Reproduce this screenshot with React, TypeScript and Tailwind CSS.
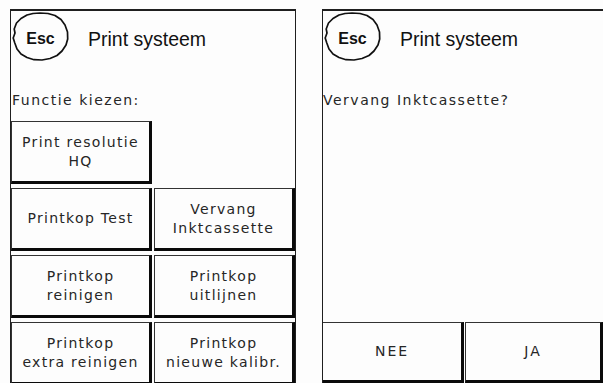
const body = "font-['DejaVu_Sans',sans-serif] text-[14px] tracking-[1.3px] text-[#262626]"

function EscButton() {
  return (
    <div className="relative w-[57px] h-[49px] shrink-0 flex items-center justify-center">
      <svg className="absolute inset-0" width="57" height="49" viewBox="0 0 57 49" fill="none">
        <path
          d="M28 1 L36 1.5 L43 3.5 L49 7.5 L53 13 L55.5 20 L55.7 27 L54 33 L50 39 L45 43.5 L38 46.5 L30 48 L22 47.7 L15 45.5 L9 42 L5 37 L2.8 31 L1.2 26 L3 21 L2.2 17 L4.5 11 L9 6.5 L15 3 L21 1.5 Z"
          stroke="#111"
          strokeWidth="1.7"
          strokeLinejoin="round"
        />
      </svg>
      <span className="relative font-['Liberation_Sans',sans-serif] font-bold tracking-normal text-[16px] leading-none text-[#111] mt-[5px]">
        Esc
      </span>
    </div>
  )
}

function Header() {
  return (
    <div className="flex items-start">
      <div className="ml-px mt-px">
        <EscButton />
      </div>
      <h1 className="ml-[19px] mt-[16px] font-['Liberation_Sans',sans-serif] tracking-normal text-[19.5px] leading-[24px] text-[#111]">
        Print systeem
      </h1>
    </div>
  )
}

function Key({ label, className = '' }: { label: string; className?: string }) {
  const lines = label.split('\n')
  return (
    <div
      className={`flex flex-col items-center justify-center border-t border-l border-r-[3px] border-b-[3px] border-t-[#333] border-l-[#333] border-r-[#0a0a0a] border-b-[#0a0a0a] bg-[#fdfdfd] text-center leading-[19px] ${className}`}
    >
      {lines.map((l) => (
        <span key={l}>{l}</span>
      ))}
    </div>
  )
}

export default function App() {
  return (
    <div className={`w-[603px] h-[383px] overflow-hidden bg-[#fdfdfd] flex pt-[9px] ${body}`}>
      {/* linker scherm */}
      <div className="ml-[10px] w-[286px] h-[374px] border-l border-r border-t-2 border-[#1f1f1f] flex flex-col overflow-hidden">
        <Header />
        <p className="mt-[29px] leading-[20px] pl-px tracking-[1.5px]">Functie kiezen:</p>
        <div className="mt-[11px] grid grid-cols-2 gap-x-[2px] gap-y-[4px] auto-rows-[63px]">
          <Key label={'Print resolutie\nHQ'} />
          <div />
          <Key label="Printkop Test" />
          <Key label={'Vervang\nInktcassette'} />
          <Key label={'Printkop\nreinigen'} />
          <Key label={'Printkop\nuitlijnen'} />
          <Key label={'Printkop\nextra reinigen'} />
          <Key label={'Printkop\nnieuwe kalibr.'} />
        </div>
      </div>

      {/* rechter scherm */}
      <div className="ml-[26px] flex-1 h-[374px] border-l border-t-2 border-[#1f1f1f] flex flex-col overflow-hidden">
        <Header />
        <p className="mt-[29px] leading-[20px] tracking-[1.5px]">Vervang Inktcassette?</p>
        <div className="mt-auto flex gap-x-[1px] h-[61px]">
          <Key label="NEE" className="w-[142px] -ml-px tracking-[2px]" />
          <Key label="JA" className="flex-1 tracking-[2px] border-r-0" />
        </div>
      </div>
    </div>
  )
}
